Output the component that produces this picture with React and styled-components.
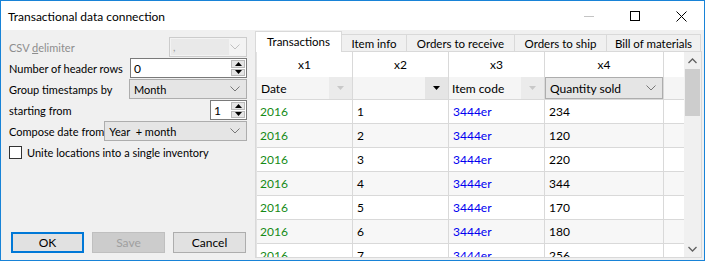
import React from 'react';
import styled, { createGlobalStyle } from 'styled-components';

const GlobalStyle = createGlobalStyle`
  html, body { margin: 0; padding: 0; background: #ffffff; }
  body { font-family: Lato, "Liberation Sans", sans-serif; font-size: 12px; color: #000; }
  * { box-sizing: border-box; }
`;

const Window = styled.div`
  width: 705px;
  height: 261px;
  border: 1px solid #1883d7;
  background: #f0f0f0;
  display: flex;
  flex-direction: column;
  overflow: hidden;
`;

const TitleBar = styled.div`
  height: 29px;
  flex-shrink: 0;
  background: #ffffff;
  display: flex;
  align-items: center;
  padding-left: 7px;
`;

const Title = styled.div`
  flex: 1;
  font-size: 12px;
  padding-top: 1px;
`;

const CaptionButton = styled.div`
  width: 46px;
  height: 29px;
  display: flex;
  align-items: center;
  justify-content: center;
  padding-top: 1px;
`;

const Body = styled.div`
  flex: 1;
  display: flex;
  min-height: 0;
`;

const LeftPanel = styled.div`
  width: 254px;
  flex-shrink: 0;
  display: flex;
  flex-direction: column;
  padding: 7px 8px 7px 8px;
  font-size: 11px;
`;

const Form = styled.div`
  display: flex;
  flex-direction: column;
  gap: 1px;
`;

const FormRow = styled.div`
  height: 20px;
  display: flex;
  align-items: center;
  justify-content: space-between;
`;

const Label = styled.span`
  color: ${(p) => (p.$disabled ? '#8d8d8d' : '#000')};
  white-space: nowrap;
`;

const Combo = styled.div`
  width: ${(p) => p.$w}px;
  height: ${(p) => p.$h || 20}px;
  display: flex;
  align-items: center;
  justify-content: space-between;
  padding: 0 6px 0 ${(p) => (p.$disabled ? 1 : 4)}px;
  background: ${(p) => (p.$disabled ? '#f3f3f3' : '#e5e5e5')};
  border: 1px solid ${(p) => (p.$disabled ? '#cccccc' : '#adadad')};
  color: ${(p) => (p.$disabled ? '#9a9a9a' : '#000')};
  white-space: nowrap;
`;

const ComboField = styled.div`
  width: 58px;
  height: 16px;
  background: #e9e9e9;
  padding-left: 2px;
  line-height: 16px;
`;

const SpinBox = styled.div`
  width: ${(p) => p.$w}px;
  height: 20px;
  display: flex;
  align-items: center;
  justify-content: space-between;
  background: #ffffff;
  border: 1px solid #7a7a7a;
  padding: 1px 1px 1px 3px;
  font-size: 12px;
`;

const SpinButtons = styled.div`
  width: 14px;
  height: 100%;
  display: flex;
  flex-direction: column;
  gap: 1px;
`;

const SpinHalf = styled.div`
  flex: 1;
  background: #e5e5e5;
  border: 1px solid #b9b9b9;
  display: flex;
  align-items: center;
  justify-content: center;
`;

const CheckRow = styled.label`
  height: 20px;
  display: flex;
  align-items: center;
  gap: 5px;
`;

const CheckBox = styled.span`
  width: 13px;
  height: 13px;
  border: 1px solid #333333;
  background: #ffffff;
`;

const Spacer = styled.div`
  flex: 1;
`;

const ButtonRow = styled.div`
  display: flex;
  gap: 8px;
  padding-left: 2px;
`;

const Button = styled.div`
  width: 73px;
  height: 21px;
  display: flex;
  align-items: center;
  justify-content: center;
  background: ${(p) => (p.$disabled ? '#cccccc' : '#e1e1e1')};
  border: ${(p) => (p.$default ? '2px solid #0078d7' : p.$disabled ? '1px solid #bfbfbf' : '1px solid #adadad')};
  color: ${(p) => (p.$disabled ? '#9f9f9f' : '#000')};
  font-size: 12px;
`;

const RightPanel = styled.div`
  width: 447px;
  display: flex;
  flex-direction: column;
  margin: 1px 2px 2px 0;
`;

const TabStrip = styled.div`
  display: flex;
  height: 20px;
  position: relative;
  z-index: 1;
  font-size: 11.5px;
`;

const Tab = styled.div`
  width: ${(p) => p.$w}px;
  height: ${(p) => (p.$active ? 21 : 17)}px;
  margin-top: ${(p) => (p.$active ? 0 : 3)}px;
  margin-left: ${(p) => (p.$first ? 0 : -1)}px;
  background: ${(p) => (p.$active ? '#ffffff' : '#f0f0f0')};
  border: 1px solid #d9d9d9;
  border-bottom: none;
  display: flex;
  align-items: center;
  justify-content: center;
  padding-bottom: ${(p) => (p.$active ? 2 : 0)}px;
  white-space: nowrap;
`;

const TabPanel = styled.div`
  flex: 1;
  min-height: 0;
  border: 1px solid #d9d9d9;
  background: #ffffff;
  display: flex;
`;

const Grid = styled.div`
  flex: 1;
  display: flex;
  flex-direction: column;
  overflow: hidden;
  border-left: 1px solid #e3e3e3;
`;

const GridRow = styled.div`
  display: flex;
  flex-shrink: 0;
  height: ${(p) => p.$h}px;
  background: ${(p) => p.$bg || '#ffffff'};
  border-bottom: ${(p) => (p.$line ? '1px solid #d9d9d9' : 'none')};
`;

const Cell = styled.div`
  width: ${(p) => p.$w}px;
  flex-shrink: 0;
  border-right: 1px solid #d9d9d9;
  display: flex;
  align-items: center;
  justify-content: ${(p) => (p.$center ? 'center' : 'space-between')};
  padding-left: ${(p) => p.$pl ?? 0}px;
  color: ${(p) => p.$color || '#000'};
  white-space: nowrap;
  overflow: hidden;
`;

const DropButton = styled.div`
  width: 23px;
  height: 100%;
  background: ${(p) => (p.$disabled ? '#ebebeb' : '#e5e5e5')};
  display: flex;
  align-items: center;
  justify-content: center;
`;

const Scrollbar = styled.div`
  width: 17px;
  flex-shrink: 0;
  background: #f0f0f0;
  display: flex;
  flex-direction: column;
  align-items: center;
`;

const ScrollArrow = styled.div`
  width: 100%;
  height: 17px;
  display: flex;
  align-items: center;
  justify-content: center;
`;

const ScrollThumb = styled.div`
  width: 15px;
  height: 47px;
  background: #cdcdcd;
`;

const Chevron = ({ up, color = '#606060' }) => (
  <svg width="9" height="6" viewBox="0 0 9 6">
    <path d={up ? 'M0.5 5 L4.5 1 L8.5 5' : 'M0.5 1 L4.5 5 L8.5 1'} fill="none" stroke={color} strokeWidth="1.3" />
  </svg>
);

const ComboChevron = ({ color = '#777' }) => (
  <svg width="10" height="6" viewBox="0 0 10 6">
    <path d="M0.5 0.5 L5 5 L9.5 0.5" fill="none" stroke={color} strokeWidth="1" />
  </svg>
);

const Tri = ({ up, color = '#000', w = 7, h = 4 }) => (
  <svg width={w} height={h} viewBox={`0 0 ${w} ${h}`}>
    <polygon points={up ? `0,${h} ${w / 2},0 ${w},${h}` : `0,0 ${w},0 ${w / 2},${h}`} fill={color} />
  </svg>
);

const cols = [96, 96, 96, 119];

const rows = [
  ['2016', '1', '3444er', '234'],
  ['2016', '2', '3444er', '120'],
  ['2016', '3', '3444er', '220'],
  ['2016', '4', '3444er', '344'],
  ['2016', '5', '3444er', '170'],
  ['2016', '6', '3444er', '180'],
  ['2016', '7', '3444er', '256'],
];

const tabs = [
  ['Transactions', 87],
  ['Item info', 66],
  ['Orders to receive', 109],
  ['Orders to ship', 93],
  ['Bill of materials', 95],
];

const colColors = ['#168a16', '#000', '#0000f0', '#000'];

const Spin = ({ w, value }) => (
  <SpinBox $w={w}>
    <span>{value}</span>
    <SpinButtons>
      <SpinHalf>
        <Tri up w={7} h={4} />
      </SpinHalf>
      <SpinHalf>
        <Tri w={7} h={4} />
      </SpinHalf>
    </SpinButtons>
  </SpinBox>
);

export default function App() {
  return (
    <>
      <GlobalStyle />
      <Window>
        <TitleBar>
          <Title>Transactional data connection</Title>
          <CaptionButton>
            <svg width="10" height="10" viewBox="0 0 10 10">
              <line x1="0" y1="5.5" x2="10" y2="5.5" stroke="#c4c4c4" strokeWidth="1" />
            </svg>
          </CaptionButton>
          <CaptionButton>
            <svg width="10" height="10" viewBox="0 0 10 10">
              <rect x="0.5" y="0.5" width="9" height="9" fill="none" stroke="#000" strokeWidth="1" />
            </svg>
          </CaptionButton>
          <CaptionButton>
            <svg width="11" height="11" viewBox="0 0 11 11">
              <path d="M0.5 0.5 L10.5 10.5 M10.5 0.5 L0.5 10.5" stroke="#000" strokeWidth="1" />
            </svg>
          </CaptionButton>
        </TitleBar>
        <Body>
          <LeftPanel>
            <Form>
              <FormRow>
                <Label $disabled>
                  CSV <u>d</u>elimiter
                </Label>
                <Combo $w={78} $disabled>
                  <ComboField>,</ComboField>
                  <ComboChevron color="#c0c0c0" />
                </Combo>
              </FormRow>
              <FormRow>
                <Label>Number of header rows</Label>
                <Spin w={117} value="0" />
              </FormRow>
              <FormRow>
                <Label>Group timestamps by</Label>
                <Combo $w={118}>
                  <span>Month</span>
                  <ComboChevron />
                </Combo>
              </FormRow>
              <FormRow>
                <Label>starting from</Label>
                <Spin w={37} value="1" />
              </FormRow>
              <FormRow>
                <Label>Compose date from</Label>
                <Combo $w={143}>
                  <span>Year&nbsp; + month</span>
                  <ComboChevron />
                </Combo>
              </FormRow>
              <CheckRow>
                <CheckBox />
                <Label>Unite locations into a single inventory</Label>
              </CheckRow>
            </Form>
            <Spacer />
            <ButtonRow>
              <Button $default>OK</Button>
              <Button $disabled>Save</Button>
              <Button>Cancel</Button>
            </ButtonRow>
          </LeftPanel>
          <RightPanel>
            <TabStrip>
              {tabs.map(([t, w], i) => (
                <Tab key={t} $w={w} $active={i === 0} $first={i === 0}>
                  {t}
                </Tab>
              ))}
            </TabStrip>
            <TabPanel>
              <Grid>
                <GridRow $h={25}>
                  {['x1', 'x2', 'x3', 'x4'].map((x, i) => (
                    <Cell key={x} $w={cols[i]} $center>
                      {x}
                    </Cell>
                  ))}
                </GridRow>
                <GridRow $h={23} $bg="#f5f5f5" $line>
                  <Cell $w={cols[0]} $pl={4}>
                    <span>Date</span>
                    <DropButton $disabled>
                      <Tri color="#c8c8c8" />
                    </DropButton>
                  </Cell>
                  <Cell $w={cols[1]}>
                    <span />
                    <DropButton>
                      <Tri />
                    </DropButton>
                  </Cell>
                  <Cell $w={cols[2]} $pl={3}>
                    <span>Item code</span>
                    <DropButton $disabled>
                      <Tri color="#c8c8c8" />
                    </DropButton>
                  </Cell>
                  <Cell $w={cols[3]}>
                    <Combo $w={119} $h={22}>
                      <span>Quantity sold</span>
                      <ComboChevron />
                    </Combo>
                  </Cell>
                </GridRow>
                {rows.map((r, ri) => (
                  <GridRow key={ri} $h={24} $bg={ri % 2 === 1 ? '#f7f7f7' : '#ffffff'} $line>
                    {r.map((v, ci) => (
                      <Cell key={ci} $w={cols[ci]} $pl={ci === 0 ? 3 : 4} $color={colColors[ci]}>
                        {v}
                      </Cell>
                    ))}
                  </GridRow>
                ))}
              </Grid>
              <Scrollbar>
                <ScrollArrow>
                  <Chevron up />
                </ScrollArrow>
                <ScrollThumb />
                <Spacer />
                <ScrollArrow>
                  <Chevron />
                </ScrollArrow>
              </Scrollbar>
            </TabPanel>
          </RightPanel>
        </Body>
      </Window>
    </>
  );
}
